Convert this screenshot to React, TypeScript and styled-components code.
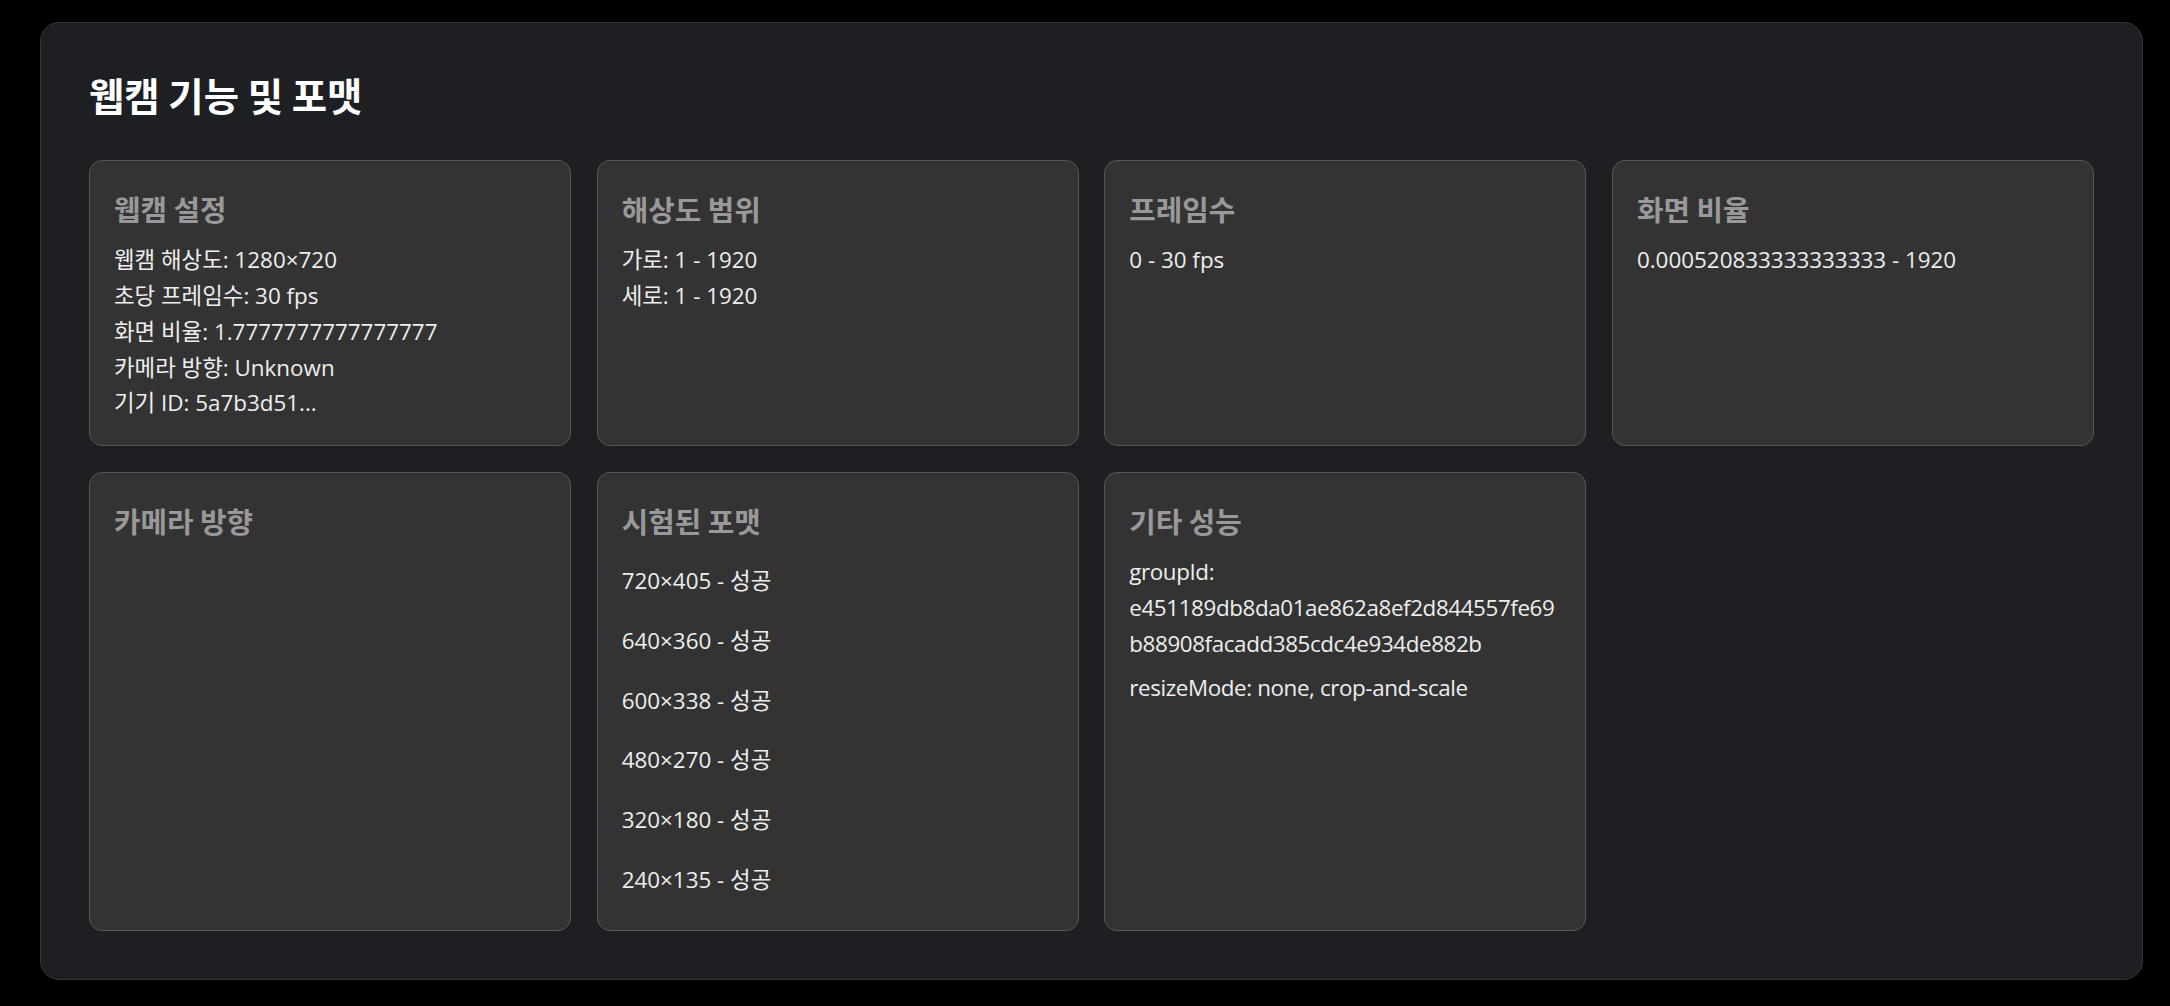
import styled, { createGlobalStyle } from 'styled-components';

const GlobalStyle = createGlobalStyle`
  html, body {
    margin: 0;
    padding: 0;
    background: #000;
  }
  body {
    font-family: "Open Sans", "Noto Sans CJK KR", sans-serif;
    color: #eeeeee;
  }
  * {
    box-sizing: border-box;
  }
`;

const Page = styled.div`
  padding: 22px 27px 25px 40px;
`;

const Panel = styled.section`
  background: #1e1f23;
  border: 1.6px solid #333438;
  border-radius: 19px;
  padding: 48px;
`;

const Title = styled.h2`
  margin: 0 0 43px;
  font-size: 38.4px;
  line-height: 46px;
  font-weight: 700;
  color: #ffffff;
  font-family: "Noto Sans CJK KR", "Open Sans", sans-serif;
`;

const Grid = styled.div`
  display: grid;
  grid-template-columns: repeat(4, 1fr);
  gap: 25.6px;
`;

const Card = styled.div`
  background: #333333;
  border: 1.6px solid #575757;
  border-radius: 13px;
  padding: 25px 24px 24px;
  min-width: 0;
`;

const CardTitle = styled.h3`
  margin: 0 0 10px;
  font-size: 28.8px;
  line-height: 46px;
  font-weight: 700;
  color: #999999;
  font-family: "Noto Sans CJK KR", "Open Sans", sans-serif;
`;

const Line = styled.div<{ $spaced?: boolean; $tight?: boolean }>`
  font-size: 22.4px;
  line-height: 35.84px;
  color: #eeeeee;
  overflow-wrap: break-word;
  letter-spacing: ${p => (p.$tight ? '-0.4px' : 'normal')};
  margin-bottom: ${p => (p.$spaced ? '8.6px' : '0')};
`;

const FormatList = styled.ul`
  list-style: none;
  margin: 15px 0 4px;
  padding: 0;
  display: flex;
  flex-direction: column;
  gap: 16px;
`;

const FormatItem = styled.li`
  padding: 4px 0;
  font-size: 22.4px;
  line-height: 35.84px;
  color: #eeeeee;
`;

const formats = [
  '720×405',
  '640×360',
  '600×338',
  '480×270',
  '320×180',
  '240×135',
];

const App = () => (
  <>
    <GlobalStyle />
    <Page>
      <Panel>
        <Title>웹캠 기능 및 포맷</Title>
        <Grid>
          <Card>
            <CardTitle>웹캠 설정</CardTitle>
            <Line>웹캠 해상도: 1280×720</Line>
            <Line>초당 프레임수: 30 fps</Line>
            <Line>화면 비율: 1.7777777777777777</Line>
            <Line>카메라 방향: Unknown</Line>
            <Line>기기 ID: 5a7b3d51...</Line>
          </Card>
          <Card>
            <CardTitle>해상도 범위</CardTitle>
            <Line>가로: 1 - 1920</Line>
            <Line>세로: 1 - 1920</Line>
          </Card>
          <Card>
            <CardTitle>프레임수</CardTitle>
            <Line>0 - 30 fps</Line>
          </Card>
          <Card>
            <CardTitle>화면 비율</CardTitle>
            <Line>0.000520833333333333 - 1920</Line>
          </Card>
          <Card>
            <CardTitle>카메라 방향</CardTitle>
          </Card>
          <Card>
            <CardTitle>시험된 포맷</CardTitle>
            <FormatList>
              {formats.map(f => (
                <FormatItem key={f}>{f} - 성공</FormatItem>
              ))}
            </FormatList>
          </Card>
          <Card>
            <CardTitle>기타 성능</CardTitle>
            <Line $spaced $tight>groupId: e451189db8da01ae862a8ef2d844557fe69b88908facadd385cdc4e934de882b</Line>
            <Line $tight>resizeMode: none, crop-and-scale</Line>
          </Card>
        </Grid>
      </Panel>
    </Page>
  </>
);

export default App;
